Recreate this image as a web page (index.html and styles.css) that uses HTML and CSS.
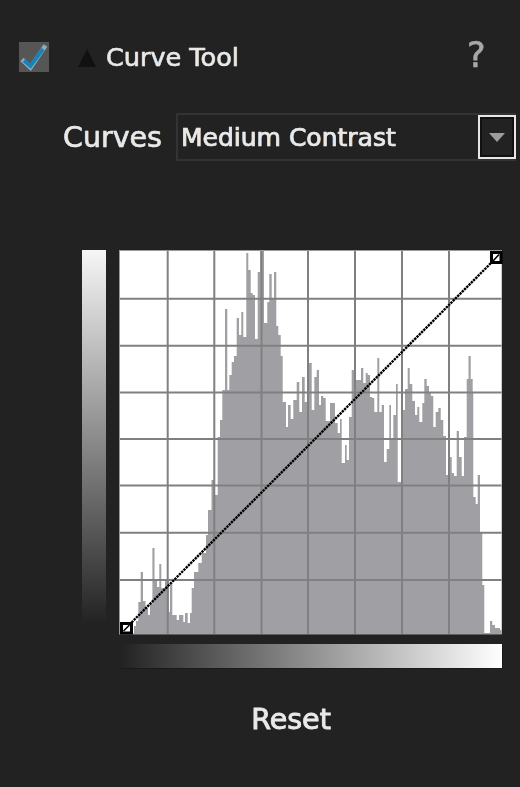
FILE: index.html
```html
<!DOCTYPE html>
<html lang="en">
<head>
<meta charset="utf-8">
<title>Curve Tool</title>
<link rel="stylesheet" href="styles.css">
</head>
<body>
<main class="panel">
  <header class="head">
    <svg class="check" viewBox="0 0 30 30" aria-hidden="true">
      <rect width="30" height="30" fill="#565656"/>
      <path d="M3 17.5 L11.5 25.5 L26.5 3.5" fill="none" stroke="#93a9b6" stroke-width="4.500"/>
      <path d="M5 18.500 L11.500 24 L24 7" fill="none" stroke="#1783b9" stroke-width="3.800"/>
    </svg>
    <svg class="tri" viewBox="0 0 18 18" aria-hidden="true"><path d="M9 0 L18 18 H0 Z" fill="#111"/></svg>
    <h1 class="title">Curve Tool</h1>
    <span class="help">?</span>
  </header>

  <div class="row">
    <label class="label">Curves</label>
    <div class="select">
      <span class="value">Medium Contrast</span>
      <span class="drop"><span class="arrow"></span></span>
    </div>
  </div>

  <div class="graph">
    <div class="vbar"></div>
    <svg class="plot" viewBox="119 250 384 385" width="384" height="385" aria-hidden="true">
      <rect x="119" y="250" width="383" height="384.500" fill="#9a9a9a"/>
      <rect x="120" y="251" width="381.500" height="382.500" fill="#fff"/>
      <path fill="#a09fa3" d="M134 634 V626 H136 V621 H138.300 V602 H140.700 V572 H143 V601 H145.500 V608 H148 V615 H150 V604 H152.400 V548 H154.500 V581 H157 V587 H159.300 V564 H161.300 V588 H165 V581 H169 V612 H170 V583 H172.300 V615 H176.700 V620 H179 V615 H183.300 V622 H185 V613 H187.700 V623 H190 V613 H191.700 V588 H194 V572 H198.300 V563 H201.700 V553 H206 V535 H208 V510 H211.500 V480 H215 V495 H217.700 V437 H220 V420 H222.300 V390 H225 V309 H227.300 V390 H229.300 V375 H231.700 V362 H234 V356 H236.700 V318 H239 V335 H241.300 V312 H243.300 V337 H246.300 V253 H248.300 V270 H250.700 V293 H252.700 V295 H255 V339 H257.700 V272 H260 V250 H264 V323 H267.300 V302 H269.300 V274 H271.700 V298 H274 V272 H276.300 V326 H278.300 V335 H280.700 V356 H282.700 V402 H286 V427 H288 V405 H290.700 V419 H293.300 V400 H296.700 V382 H299.300 V412 H302 V377 H304.700 V402 H307 V363 H311.700 V410 H314.300 V377 H316.700 V370 H319 V405 H321 V396 H323.300 V398 H325.700 V421 H330 V403 H335 V423 H337.700 V433 H340 V419 H341.700 V463 H345 V445 H346.700 V460 H349 V417 H351.700 V370 H355 V380 H361 V368 H363.300 V383 H365.700 V373 H367.700 V375 H370 V397 H372.300 V398 H374.300 V412 H377.300 V358 H379.300 V412 H381.700 V405 H384 V462 H386.700 V449 H389.300 V405 H391 V438 H393.300 V415 H396 V384 H397.700 V482 H401 V375 H402.700 V410 H405 V389 H407.700 V368 H409.700 V384 H412.300 V401 H415 V415 H417.300 V407 H419.300 V422 H422.300 V403 H424.300 V379 H426.700 V386 H429 V393 H431 V396 H433.300 V427 H435.700 V412 H438.300 V408 H440.700 V420 H443.300 V436 H446 V475 H449.300 V457 H451.700 V473 H454 V476 H456.700 V431 H459 V457 H461.700 V476 H464 V437 H466.700 V379 H468.500 V356 H470.700 V379 H472.700 V393 H473.300 V497 H475.700 V504 H477.700 V475 H480 V532 H482.300 V585 H484.300 V633 H490 V621 H492.300 V625 H495 V628 H500 V630 H501.500 V634 Z"/>
      <path fill="none" stroke="#808080" stroke-width="2" d="M167.700 251 V634 M214.300 251 V634 M261.500 251 V634 M308 251 V634 M355 251 V634 M402 251 V634 M449 251 V634 M120 298.700 H501.500 M120 345.800 H501.500 M120 392.500 H501.500 M120 439 H501.500 M120 485.500 H501.500 M120 532.800 H501.500 M120 580 H501.500"/>
      <path fill="none" stroke="#000" stroke-width="2.400" stroke-dasharray="2.400 0.800" d="M127 627 L496 258"/>
      <rect x="120" y="622" width="13" height="12.500" fill="#000"/>
      <rect x="123" y="625" width="7" height="6.500" fill="#fff"/>
      <path stroke="#000" stroke-width="1.600" d="M123.500 631 L129.500 625"/>
      <rect x="490" y="251" width="12.500" height="13" fill="#000"/>
      <rect x="493" y="254" width="6.500" height="7" fill="#fff"/>
      <path stroke="#000" stroke-width="1.600" d="M493 261 L499 254.500"/>
    </svg>
  </div>

  <div class="hbar"></div>
  <div class="reset">Reset</div>
</main>
</body>
</html>
```

FILE: styles.css
```css
html, body {
  margin: 0;
  padding: 0;
  background: #222222;
}

.panel {
  width: 520px;
  height: 787px;
  padding-top: 42px;
  box-sizing: border-box;
  overflow: hidden;
  font-family: "DejaVu Sans", sans-serif;
  color: #e9e9e9;
}

.head {
  display: flex;
  align-items: center;
  height: 30px;
  padding-left: 19px;
}

.check {
  width: 30px;
  height: 30px;
  flex: none;
  filter: blur(0.5px);
}

.tri {
  width: 18px;
  height: 18px;
  margin-left: 29px;
  margin-top: 2px;
  flex: none;
  filter: blur(0.4px);
}

.title {
  margin: 0 0 0 10px;
  width: 134px;
  flex: none;
  white-space: nowrap;
  font-size: 25.500px;
  font-weight: 400;
  -webkit-text-stroke: 0.5px #e9e9e9;
  text-shadow: -0.6px 0 rgba(70, 150, 230, .55), 0.6px 0 rgba(210, 140, 60, .55);
  filter: blur(0.4px);
}

.help {
  margin-left: 227px;
  margin-top: -4px;
  font-size: 35px;
  color: #a8a8a8;
  line-height: 30px;
  -webkit-text-stroke: 0.7px #a8a8a8;
  filter: blur(0.5px);
}

.row {
  display: flex;
  align-items: center;
  height: 48px;
  margin-top: 41px;
  padding-left: 63px;
}

.label {
  width: 113px;
  flex: none;
  font-size: 28.500px;
  -webkit-text-stroke: 0.5px #e9e9e9;
  text-shadow: -0.6px 0 rgba(70, 150, 230, .55), 0.6px 0 rgba(210, 140, 60, .55);
  filter: blur(0.4px);
}

.select {
  width: 340px;
  height: 48px;
  box-sizing: border-box;
  border: 2px solid #333333;
  display: flex;
  align-items: center;
  justify-content: space-between;
  padding-left: 3px;
}

.value {
  font-size: 25px;
  text-shadow: -0.6px 0 rgba(70, 150, 230, .6), 0.6px 0 rgba(210, 140, 60, .6);
  font-weight: 400;
  -webkit-text-stroke: 0.7px #e9e9e9;
  filter: blur(0.4px);
}

.drop {
  width: 38px;
  height: 44px;
  box-sizing: border-box;
  border: 2px solid #e6e6e6;
  outline: 2px solid #111;
  outline-offset: -4px;
  background: #222;
  display: flex;
  align-items: center;
  justify-content: center;
  margin-right: -2px;
}

.arrow {
  width: 0;
  height: 0;
  border-left: 8px solid transparent;
  border-right: 8px solid transparent;
  border-top: 9px solid #9c9c9c;
}

.graph {
  display: flex;
  align-items: flex-start;
  margin-top: 89px;
  padding-left: 82px;
}

.vbar {
  width: 24px;
  height: 374px;
  flex: none;
  margin-right: 13px;
  background: linear-gradient(to bottom, #f6f6f6, #222222);
}

.plot {
  display: block;
  flex: none;
  filter: blur(0.25px);
}

.hbar {
  width: 382px;
  height: 24px;
  margin-top: 9px;
  margin-left: 120px;
  background: linear-gradient(to right, #222222, #ffffff);
  box-shadow: 1px 1px 0 #1a1a1a;
}

.reset {
  width: 582px;
  margin-top: 35px;
  text-align: center;
  font-size: 28.500px;
  -webkit-text-stroke: 0.8px #e9e9e9;
  text-shadow: -0.6px 0 rgba(70, 150, 230, .55), 0.6px 0 rgba(210, 140, 60, .55);
  filter: blur(0.4px);
}
```
